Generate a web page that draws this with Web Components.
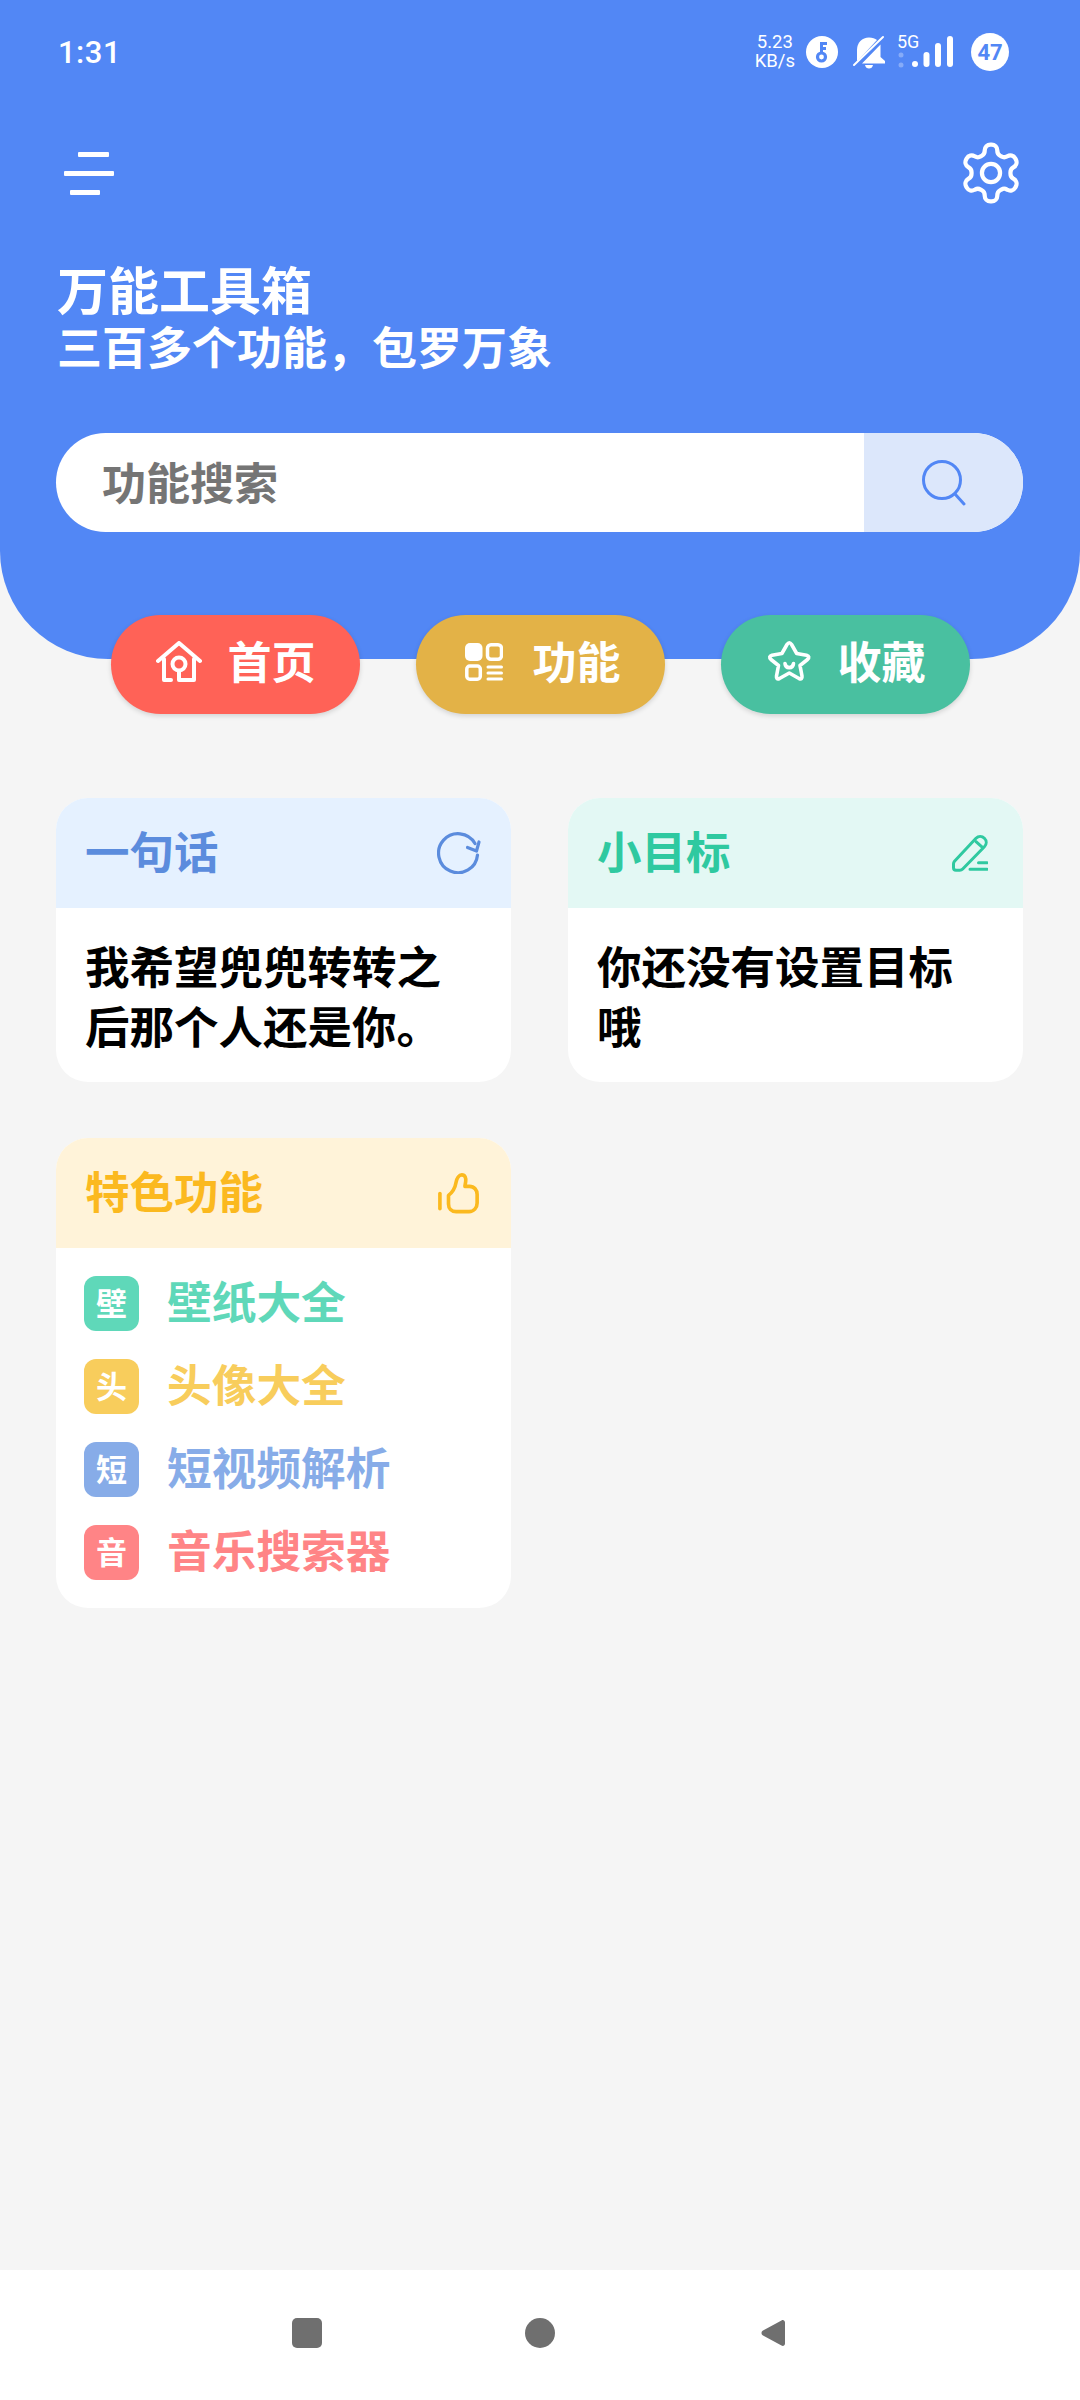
<!DOCTYPE html>
<html lang="zh">
<head>
<meta charset="utf-8">
<title>万能工具箱</title>
<style>
    html, body { margin: 0; padding: 0; }
    body {
        width: 1080px;
        height: 2400px;
        overflow: hidden;
        background: #f5f5f5;
        font-family: "Noto Sans CJK SC", "Noto Sans", sans-serif;
    }
    .cards {
        display: grid;
        grid-template-columns: 455px 455px;
        gap: 56px 57px;
        padding: 84px 56px 0;
        align-items: start;
    }
    .pills {
        display: flex;
        gap: 56px;
        justify-content: center;
        margin-top: -44px;
        position: relative;
    }
    .page { display: flex; flex-direction: column; height: 2400px; }
    .grow { flex: 1; }
</style>
</head>
<body>
<div class="page">
    <app-header title="万能工具箱" subtitle="三百多个功能，包罗万象"></app-header>
    <div class="pills">
        <nav-pill label="首页" color="#ff6257" icon="home"></nav-pill>
        <nav-pill label="功能" color="#e3b247" icon="grid"></nav-pill>
        <nav-pill label="收藏" color="#49c0a0" icon="star"></nav-pill>
    </div>
    <div class="cards">
        <info-card heading="一句话" color="#5b8cdd" tint="#e5f1ff" icon="refresh">
            <quote-text>我希望兜兜转转之后那个人还是你。</quote-text>
        </info-card>
        <info-card heading="小目标" color="#2fc9a0" tint="#e3f8f4" icon="pencil">
            <quote-text>你还没有设置目标哦</quote-text>
        </info-card>
        <info-card heading="特色功能" color="#fbb91f" tint="#fff3d9" icon="thumb">
            <feature-list>
                <feature-item label="壁纸大全" color="#5fd8b9"></feature-item>
                <feature-item label="头像大全" color="#f8cd5c"></feature-item>
                <feature-item label="短视频解析" color="#87ace8"></feature-item>
                <feature-item label="音乐搜索器" color="#ff8486"></feature-item>
            </feature-list>
        </info-card>
    </div>
    <div class="grow"></div>
    <nav-bar></nav-bar>
</div>

<script>
const ICONS = {
    home: `<svg width="46" height="42" viewBox="0 0 46 42" fill="none" stroke="#fff" stroke-width="4" stroke-linecap="round" stroke-linejoin="round">
        <path d="M2 20L23 2l21 18"/>
        <path d="M8 18v21h7"/>
        <path d="M38 18v21H23V30"/>
        <circle cx="23" cy="23" r="6.5"/>
    </svg>`,
    grid: `<svg width="38" height="38" viewBox="0 0 38 38" fill="none" stroke="#fff" stroke-width="3.5" stroke-linecap="round">
        <rect x="0" y="0" width="17.5" height="18" rx="5" fill="#fff" stroke="none"/>
        <rect x="22.5" y="1.8" width="14" height="14.4" rx="3.5"/>
        <rect x="1.8" y="23" width="13.5" height="13.2" rx="3"/>
        <path d="M23 24h13.5M23 30h13.5M23 36h13.5" stroke-width="3"/>
    </svg>`,
    star: `<svg width="44" height="44" viewBox="0 0 44 44" fill="none" stroke="#fff" stroke-width="3.6" stroke-linecap="round" stroke-linejoin="round">
        <path d="M20 4.5Q22.3 1 24.6 4.5L29.7 13.5 39.5 15.2Q43.5 16.5 40.5 19.5L33 25.5 35 36Q35.5 40 32 38.5L22.3 33 12.5 38.5Q9 40 9.5 36L11.5 25.5 4 19.5Q1 16.5 5 15.2L14.9 13.5z"/>
        <path d="M18 23.5c.5 5.5 8 5.5 8.500 0"/>
    </svg>`,
    refresh: `<svg width="44" height="42" viewBox="0 0 44 42" fill="none" stroke="currentColor" stroke-width="3.2" stroke-linecap="round" stroke-linejoin="round">
        <path d="M38 11.5A19.5 19.5 0 1 0 40.5 23"/>
        <path d="M42 10l-2.500 9-9-3.500"/>
    </svg>`,
    pencil: `<svg class="pencil" width="38" height="38" viewBox="0 0 38 38" fill="none" stroke="currentColor" stroke-width="3" stroke-linecap="round" stroke-linejoin="round">
        <path d="M3.500 30c0-1 .3-2 1-2.800L26 4.300c2.400-2.400 6-2.400 8.400 0s2.400 6 0 8.400L12.700 35c-.8.8-1.700 1.200-2.800 1.200H6c-1.600 0-2.500-1-2.500-2.500z"/>
        <path d="M26 7.700l6.700 6"/>
        <path d="M28.500 28.700h8.500M20 35.300h17"/>
    </svg>`,
    thumb: `<svg class="thumb" width="42" height="41" viewBox="0 0 44 42" fill="none" stroke="currentColor" stroke-width="3.800" stroke-linecap="round" stroke-linejoin="round">
        <path d="M2 21v16"/>
        <path d="M11 23c4-3 7-8 8-14 .7-4 3-7.500 6-7.500 3.500 0 4.500 3.500 4 7l-.8 5H33c5 0 8 4 8 8.500V31c0 5-3.500 9-8.500 9H19c-5 0-8-3.500-8-8z"/>
    </svg>`,
    gear: `<svg width="68" height="68" viewBox="0 0 24 24" fill="none" stroke="#fff" stroke-width="1.5" stroke-linecap="round" stroke-linejoin="round">
        <path d="M12.22 2h-.44a2 2 0 0 0-2 2v.18a2 2 0 0 1-1 1.73l-.43.25a2 2 0 0 1-2 0l-.15-.08a2 2 0 0 0-2.73.73l-.22.38a2 2 0 0 0 .73 2.73l.15.1a2 2 0 0 1 1 1.72v.51a2 2 0 0 1-1 1.74l-.15.09a2 2 0 0 0-.73 2.73l.22.38a2 2 0 0 0 2.73.73l.15-.08a2 2 0 0 1 2 0l.43.25a2 2 0 0 1 1 1.73V20a2 2 0 0 0 2 2h.44a2 2 0 0 0 2-2v-.18a2 2 0 0 1 1-1.73l.43-.25a2 2 0 0 1 2 0l.15.08a2 2 0 0 0 2.73-.73l.22-.39a2 2 0 0 0-.73-2.73l-.15-.08a2 2 0 0 1-1-1.74v-.5a2 2 0 0 1 1-1.74l.15-.09a2 2 0 0 0 .73-2.73l-.22-.38a2 2 0 0 0-2.73-.73l-.15.08a2 2 0 0 1-2 0l-.43-.25a2 2 0 0 1-1-1.73V4a2 2 0 0 0-2-2z"/>
        <circle cx="12" cy="12" r="3.2"/>
    </svg>`
};

class StatusBar extends HTMLElement {
    constructor() {
        super();
        this.attachShadow({ mode: 'open' });
        this.shadowRoot.innerHTML = `
            <style>
                :host {
                    display: flex;
                    align-items: center;
                    justify-content: space-between;
                    height: 104px;
                    padding: 0 71px 0 58px;
                    color: #fff;
                    font-family: Roboto, "Noto Sans", sans-serif;
                }
                svg { display: block; }
                .time { font-size: 31px; font-weight: 500; letter-spacing: .5px; }
                .icons { display: flex; align-items: center; }
                .speed { font-size: 18.5px; line-height: 19px; text-align: center; margin-right: 11px; }
                .key { margin-right: 14px; }
                .bell { margin-right: 11px; }
                .net { display: flex; flex-direction: column; width: 23px; margin-right: -8px; height: 36px; }
                .net b { font-size: 18px; font-weight: 400; line-height: 16px; }
                .bars { margin-right: 18px; }
                .batt {
                    width: 38px; height: 38px; border-radius: 50%;
                    background: #fff; color: #5287f5;
                    font-size: 22px; font-weight: 700;
                    display: flex; align-items: center; justify-content: center;
                }
            </style>
            <span class="time">1:31</span>
            <div class="icons">
                <div class="speed">5.23<br>KB/s</div>
                <svg class="key" width="32" height="32" viewBox="0 0 32 32">
                    <circle cx="16" cy="16" r="16" fill="#fff"/>
                    <circle cx="15.500" cy="21" r="4" fill="none" stroke="#5287f5" stroke-width="3.200"/>
                    <path d="M15.500 17V6M15.500 7.500h5.500M15.500 12.500h4.500" stroke="#5287f5" stroke-width="3" fill="none"/>
                </svg>
                <svg class="bell" width="34" height="34" viewBox="0 0 34 34">
                    <path d="M5 25V15C5 7.500 10 2.500 17 2.500c3.500 0 6 1 8 2.500L5.500 26z" fill="#fff"/>
                    <path d="M28.500 9.500V22l4.500 4v2.500H10z" fill="#fff"/>
                    <path d="M13 30h8c-.5 2.500-2 3.500-4 3.500s-3.500-1-4-3.500z" fill="#fff"/>
                    <path d="M2 30L31 2" stroke="#fff" stroke-width="2" stroke-linecap="round"/>
                </svg>
                <div class="net">
                    <b>5G</b>
                    <svg width="10" height="20" viewBox="0 0 10 20">
                        <circle cx="4" cy="5" r="2.500" fill="#fff" opacity=".3"/>
                        <circle cx="4" cy="15" r="2.500" fill="#fff" opacity=".3"/>
                    </svg>
                </div>
                <svg class="bars" width="41" height="32" viewBox="0 0 41 32" fill="#fff">
                    <rect x="0" y="25" width="6" height="6" rx="3"/>
                    <rect x="11.500" y="16" width="6" height="15" rx="3"/>
                    <rect x="23" y="7" width="6" height="24" rx="3"/>
                    <rect x="35" y="0" width="6" height="31" rx="3"/>
                </svg>
                <div class="batt">47</div>
            </div>
        `;
    }
}

class AppHeader extends HTMLElement {
    constructor() {
        super();
        this.attachShadow({ mode: 'open' });
        this.shadowRoot.innerHTML = `
            <style>
                :host {
                    display: block;
                    height: 659px;
                    background: #5287f5;
                    border-radius: 0 0 108px 108px;
                    color: #fff;
                }
                .tools {
                    display: flex;
                    justify-content: space-between;
                    align-items: center;
                    height: 70px;
                    margin-top: 34px;
                    padding: 0 55px 0 64px;
                }
                .menu { display: flex; flex-direction: column; gap: 14px; width: 50px; }
                .menu i { display: block; height: 5px; background: #fff; border-radius: 1px; }
                .menu i:nth-child(1) { width: 31px; margin-left: 14px; }
                .menu i:nth-child(3) { width: 30px; margin-left: 6px; }
                .text { padding: 51px 57px 0; }
                h1, h2 { margin: 0; font-weight: 700; line-height: 58px; }
                h1 { font-size: 51px; }
                h2 { font-size: 45px; }
                search-box { margin: 58px 57px 0 56px; }
            </style>
            <status-bar></status-bar>
            <div class="tools">
                <div class="menu"><i></i><i></i><i></i></div>
                ${ICONS.gear}
            </div>
            <div class="text">
                <h1>${this.getAttribute('title')}</h1>
                <h2>${this.getAttribute('subtitle')}</h2>
            </div>
            <search-box></search-box>
        `;
    }
}

class SearchBox extends HTMLElement {
    constructor() {
        super();
        this.attachShadow({ mode: 'open' });
        this.shadowRoot.innerHTML = `
            <style>
                :host {
                    display: flex;
                    height: 99px;
                    border-radius: 50px;
                    overflow: hidden;
                    background: #fff;
                }
                svg { display: block; }
                .hint {
                    flex: 1;
                    padding-left: 46px;
                    font-size: 44px;
                    font-weight: 700;
                    line-height: 96px;
                    color: #757575;
                }
                .go {
                    width: 159px;
                    background: #dce7fb;
                    display: flex;
                    align-items: center;
                    padding-left: 58px;
                    box-sizing: border-box;
                }
            </style>
            <div class="hint">功能搜索</div>
            <div class="go">
                <svg width="44" height="46" viewBox="0 0 44 46" fill="none" stroke="#5287f5" stroke-width="3" stroke-linecap="round">
                    <circle cx="20" cy="20" r="18.500"/>
                    <path d="M33 34l9 10"/>
                </svg>
            </div>
        `;
    }
}

class NavPill extends HTMLElement {
    constructor() {
        super();
        this.attachShadow({ mode: 'open' });
        this.shadowRoot.innerHTML = `
            <style>
                :host {
                    display: flex;
                    align-items: center;
                    gap: 26px;
                    box-sizing: border-box;
                    width: 249px;
                    height: 99px;
                    padding-left: 45px;
                    border-radius: 50px;
                    background: ${this.getAttribute('color')};
                    box-shadow: 0 2px 5px rgba(0, 0, 0, .14);
                    color: #fff;
                    font-size: 44px;
                    font-weight: 700;
                }
                .slot { width: 46px; display: flex; justify-content: center; margin-top: -5px; }
                svg { display: block; }
                .label { padding-bottom: 9px; }
            </style>
            <div class="slot">${ICONS[this.getAttribute('icon')]}</div>
            <span class="label">${this.getAttribute('label')}</span>
        `;
    }
}

class InfoCard extends HTMLElement {
    constructor() {
        super();
        this.attachShadow({ mode: 'open' });
        this.shadowRoot.innerHTML = `
            <style>
                :host {
                    display: block;
                    background: #fff;
                    border-radius: 32px;
                    overflow: hidden;
                }
                header {
                    display: flex;
                    align-items: center;
                    justify-content: space-between;
                    height: 110px;
                    box-sizing: border-box;
                    padding: 0 30px 0 29px;
                    background: ${this.getAttribute('tint')};
                    color: ${this.getAttribute('color')};
                    font-size: 44.5px;
                    font-weight: 700;
                }
                header span { padding-bottom: 7px; }
                svg { display: block; }
                .pencil { margin-right: 5px; }
                .thumb { margin-right: 1px; }
            </style>
            <header>
                <span>${this.getAttribute('heading')}</span>
                ${ICONS[this.getAttribute('icon')]}
            </header>
            <slot></slot>
        `;
    }
}

class QuoteText extends HTMLElement {
    constructor() {
        super();
        this.attachShadow({ mode: 'open' });
        this.shadowRoot.innerHTML = `
            <style>
                :host {
                    display: block;
                    padding: 27px 29px;
                    font-size: 44.5px;
                    font-weight: 700;
                    line-height: 60px;
                    color: #000;
                }
            </style>
            <slot></slot>
        `;
    }
}

class FeatureList extends HTMLElement {
    constructor() {
        super();
        this.attachShadow({ mode: 'open' });
        this.shadowRoot.innerHTML = `
            <style>
                :host {
                    display: flex;
                    flex-direction: column;
                    gap: 28px;
                    padding: 28px;
                }
            </style>
            <slot></slot>
        `;
    }
}

class FeatureItem extends HTMLElement {
    constructor() {
        super();
        this.attachShadow({ mode: 'open' });
        const label = this.getAttribute('label');
        const color = this.getAttribute('color');
        this.shadowRoot.innerHTML = `
            <style>
                :host {
                    display: flex;
                    align-items: center;
                    gap: 28px;
                    height: 55px;
                    color: ${color};
                    font-size: 44.7px;
                    font-weight: 700;
                }
                .badge {
                    box-sizing: border-box;
                    width: 55px;
                    height: 55px;
                    padding-bottom: 5px;
                    border-radius: 12px;
                    background: ${color};
                    color: #fff;
                    font-size: 31px;
                    display: flex;
                    align-items: center;
                    justify-content: center;
                }
                .label { padding-bottom: 8px; }
            </style>
            <span class="badge">${label[0]}</span>
            <span class="label">${label}</span>
        `;
    }
}

class NavBar extends HTMLElement {
    constructor() {
        super();
        this.attachShadow({ mode: 'open' });
        this.shadowRoot.innerHTML = `
            <style>
                :host {
                    display: flex;
                    align-items: center;
                    justify-content: center;
                    gap: 203px;
                    box-sizing: border-box;
                    height: 130px;
                    padding-bottom: 5px;
                    background: #fff;
                }
                svg { display: block; }
            </style>
            <svg width="30" height="30" viewBox="0 0 30 30"><rect width="30" height="30" rx="5" fill="#6f6f6f"/></svg>
            <svg width="30" height="30" viewBox="0 0 30 30"><circle cx="15" cy="15" r="15" fill="#6f6f6f"/></svg>
            <svg width="30" height="30" viewBox="0 0 30 30"><path d="M27 4.500v21c0 2-2 3-3.500 2L5 17.500c-2-1.200-2-3.800 0-5L23.500 2.500c1.500-1 3.500 0 3.500 2z" fill="#6f6f6f"/></svg>
        `;
    }
}

// Children first, so the header finds status-bar and search-box already defined
customElements.define('status-bar', StatusBar);
customElements.define('search-box', SearchBox);
customElements.define('app-header', AppHeader);
customElements.define('nav-pill', NavPill);
customElements.define('info-card', InfoCard);
customElements.define('quote-text', QuoteText);
customElements.define('feature-list', FeatureList);
customElements.define('feature-item', FeatureItem);
customElements.define('nav-bar', NavBar);
</script>
</body>
</html>
